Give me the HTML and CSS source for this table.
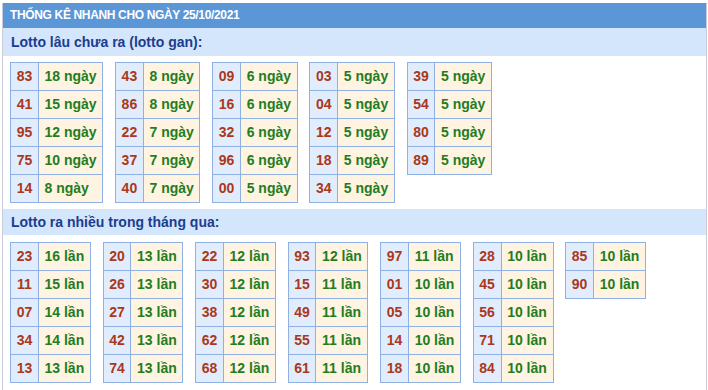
FILE: index.html
```html
<!DOCTYPE html>
<html lang="vi">
<head>
<meta charset="utf-8">
<title>Thống kê nhanh</title>
<link rel="stylesheet" href="styles.css">
</head>
<body>
<div class="box">
  <div class="head">THỐNG KÊ NHANH CHO NGÀY 25/10/2021</div>
  <div class="sub">Lotto lâu chưa ra (lotto gan):</div>
  <div class="tables">
    <table class="t"><tr><td class="n">83</td><td class="v">18 ngày</td></tr><tr><td class="n">41</td><td class="v">15 ngày</td></tr><tr><td class="n">95</td><td class="v">12 ngày</td></tr><tr><td class="n">75</td><td class="v">10 ngày</td></tr><tr><td class="n">14</td><td class="v">8 ngày</td></tr></table>
    <table class="t"><tr><td class="n">43</td><td class="v">8 ngày</td></tr><tr><td class="n">86</td><td class="v">8 ngày</td></tr><tr><td class="n">22</td><td class="v">7 ngày</td></tr><tr><td class="n">37</td><td class="v">7 ngày</td></tr><tr><td class="n">40</td><td class="v">7 ngày</td></tr></table>
    <table class="t"><tr><td class="n">09</td><td class="v">6 ngày</td></tr><tr><td class="n">16</td><td class="v">6 ngày</td></tr><tr><td class="n">32</td><td class="v">6 ngày</td></tr><tr><td class="n">96</td><td class="v">6 ngày</td></tr><tr><td class="n">00</td><td class="v">5 ngày</td></tr></table>
    <table class="t"><tr><td class="n">03</td><td class="v">5 ngày</td></tr><tr><td class="n">04</td><td class="v">5 ngày</td></tr><tr><td class="n">12</td><td class="v">5 ngày</td></tr><tr><td class="n">18</td><td class="v">5 ngày</td></tr><tr><td class="n">34</td><td class="v">5 ngày</td></tr></table>
    <table class="t"><tr><td class="n">39</td><td class="v">5 ngày</td></tr><tr><td class="n">54</td><td class="v">5 ngày</td></tr><tr><td class="n">80</td><td class="v">5 ngày</td></tr><tr><td class="n">89</td><td class="v">5 ngày</td></tr></table>
  </div>
  <div class="sub sub2">Lotto ra nhiều trong tháng qua:</div>
  <div class="tables">
    <table class="t"><tr><td class="n">23</td><td class="v">16 lần</td></tr><tr><td class="n">11</td><td class="v">15 lần</td></tr><tr><td class="n">07</td><td class="v">14 lần</td></tr><tr><td class="n">34</td><td class="v">14 lần</td></tr><tr><td class="n">13</td><td class="v">13 lần</td></tr></table>
    <table class="t"><tr><td class="n">20</td><td class="v">13 lần</td></tr><tr><td class="n">26</td><td class="v">13 lần</td></tr><tr><td class="n">27</td><td class="v">13 lần</td></tr><tr><td class="n">42</td><td class="v">13 lần</td></tr><tr><td class="n">74</td><td class="v">13 lần</td></tr></table>
    <table class="t"><tr><td class="n">22</td><td class="v">12 lần</td></tr><tr><td class="n">30</td><td class="v">12 lần</td></tr><tr><td class="n">38</td><td class="v">12 lần</td></tr><tr><td class="n">62</td><td class="v">12 lần</td></tr><tr><td class="n">68</td><td class="v">12 lần</td></tr></table>
    <table class="t"><tr><td class="n">93</td><td class="v">12 lần</td></tr><tr><td class="n">15</td><td class="v">11 lần</td></tr><tr><td class="n">49</td><td class="v">11 lần</td></tr><tr><td class="n">55</td><td class="v">11 lần</td></tr><tr><td class="n">61</td><td class="v">11 lần</td></tr></table>
    <table class="t"><tr><td class="n">97</td><td class="v">11 lần</td></tr><tr><td class="n">01</td><td class="v">10 lần</td></tr><tr><td class="n">05</td><td class="v">10 lần</td></tr><tr><td class="n">14</td><td class="v">10 lần</td></tr><tr><td class="n">18</td><td class="v">10 lần</td></tr></table>
    <table class="t"><tr><td class="n">28</td><td class="v">10 lần</td></tr><tr><td class="n">45</td><td class="v">10 lần</td></tr><tr><td class="n">56</td><td class="v">10 lần</td></tr><tr><td class="n">71</td><td class="v">10 lần</td></tr><tr><td class="n">84</td><td class="v">10 lần</td></tr></table>
    <table class="t"><tr><td class="n">85</td><td class="v">10 lần</td></tr><tr><td class="n">90</td><td class="v">10 lần</td></tr></table>
  </div>
</div>
</body>
</html>
```

FILE: styles.css
```css
html, body {
  margin: 0;
  padding: 0;
  background: #ffffff;
}
body {
  padding: 3px 1px 0 2px;
  font-family: "Liberation Sans", Arial, sans-serif;
}
.box {
  border-left: 1px solid #c9ccd6;
  border-right: 1px solid #c9ccd6;
  min-height: 400px;
}
.head {
  background: #5b96d6;
  color: #ffffff;
  font-weight: bold;
  font-size: 12px;
  letter-spacing: -0.35px;
  height: 25px;
  line-height: 25px;
  padding-left: 7px;
}
.sub {
  background: #d4e6fb;
  color: #1b3d8f;
  font-weight: bold;
  font-size: 14px;
  height: 28px;
  line-height: 28px;
  padding-left: 8px;
}
.sub2 {
  height: 26px;
  line-height: 26px;
}
.tables {
  display: flex;
  flex-wrap: wrap;
  align-items: flex-start;
  gap: 11.7px;
  padding: 6px 7px 6px 7px;
}
.sub2 + .tables {
  padding-top: 7px;
}
.t {
  border-collapse: collapse;
  font-size: 14px;
  font-weight: bold;
}
.t td {
  border: 1px solid #8fb0e2;
  height: 27px;
  line-height: 27px;
  padding: 0 5.65px;
  white-space: nowrap;
}
.t td.n {
  background: #e1edfc;
  color: #a9381d;
  text-align: center;
}
.t td.v {
  background: #fff3e1;
  color: #1f7d1f;
}
```
